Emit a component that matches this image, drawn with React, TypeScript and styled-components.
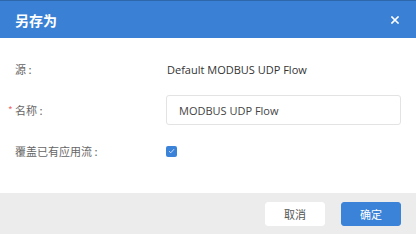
import React from "react";
import styled, { createGlobalStyle } from "styled-components";

const Global = createGlobalStyle`
  html, body { margin: 0; padding: 0; background: #ffffff; }
  body { font-family: "Open Sans", "Noto Sans CJK SC", sans-serif; }
  * { box-sizing: border-box; }
`;

const Dialog = styled.div`
  width: 416px;
  height: 234px;
  display: flex;
  flex-direction: column;
  background: #ffffff;
  overflow: hidden;
`;

const Header = styled.div`
  height: 38px;
  flex: none;
  display: flex;
  align-items: center;
  justify-content: space-between;
  padding: 0 16px 0 15px;
  background: #3a81d5;
  border-top: 1px solid #2e67aa;
`;

const Title = styled.div`
  color: #ffffff;
  font-size: 14px;
  font-weight: 700;
  font-family: "Noto Sans CJK SC", sans-serif;
`;

const Close = styled.button`
  border: none;
  background: transparent;
  padding: 0;
  width: 10px;
  height: 10px;
  display: flex;
  align-items: center;
  justify-content: center;
  cursor: pointer;
`;

const Body = styled.div`
  flex: 1;
  padding: 16px 15px 0 15px;
  display: flex;
  flex-direction: column;
  gap: 11px;
`;

const Row = styled.div`
  display: grid;
  grid-template-columns: 151px 1fr;
  align-items: center;
  height: 30px;
`;

const Label = styled.label<{ $required?: boolean }>`
  position: relative;
  font-size: 11px;
  color: #666666;
  font-family: "Noto Sans CJK SC", sans-serif;
  &::before {
    content: ${(p) => (p.$required ? '"*"' : "none")};
    position: absolute;
    left: -7px;
    top: 0px;
    color: #f06a6a;
    font-size: 10px;
  }
`;

const Value = styled.div`
  font-size: 11px;
  color: #333333;
  padding-left: 1px;
`;

const Input = styled.input`
  width: 235px;
  height: 30px;
  border: 1px solid #e3e3e3;
  border-radius: 3px;
  padding: 0 12px;
  font-size: 11px;
  font-family: "Open Sans", "Noto Sans CJK SC", sans-serif;
  color: #444444;
  outline: none;
  background: #ffffff;
`;

const Check = styled.span`
  width: 11px;
  height: 11px;
  border-radius: 2px;
  background: #3a83d8;
  display: flex;
  align-items: center;
  justify-content: center;
`;

const Footer = styled.div`
  height: 41px;
  flex: none;
  background: #ececec;
  display: flex;
  align-items: center;
  justify-content: flex-end;
  gap: 16px;
  padding: 0 15px;
`;

const Button = styled.button<{ $primary?: boolean }>`
  width: 60px;
  height: 24px;
  border-radius: 3px;
  border: 1px solid ${(p) => (p.$primary ? "#3a83d8" : "#ffffff")};
  background: ${(p) => (p.$primary ? "#3a83d8" : "#ffffff")};
  color: ${(p) => (p.$primary ? "#ffffff" : "#555555")};
  font-size: 11px;
  font-family: "Noto Sans CJK SC", sans-serif;
  padding: 0;
  cursor: pointer;
`;

export default function App() {
  return (
    <>
      <Global />
      <Dialog>
        <Header>
          <Title>另存为</Title>
          <Close aria-label="close">
            <svg width="8" height="8" viewBox="0 0 8 8">
              <path d="M1 1L7 7M7 1L1 7" stroke="#ffffff" strokeWidth="1.6" strokeLinecap="square" />
            </svg>
          </Close>
        </Header>
        <Body>
          <Row>
            <Label>源 :</Label>
            <Value>Default MODBUS UDP Flow</Value>
          </Row>
          <Row>
            <Label $required>名称 :</Label>
            <Input defaultValue="MODBUS UDP Flow" />
          </Row>
          <Row>
            <Label>覆盖已有应用流 :</Label>
            <Check>
              <svg width="7" height="6" viewBox="0 0 7 6">
                <path d="M1 3.2L2.8 4.8L6 1.2" stroke="#dce8f8" strokeWidth="0.9" fill="none" />
              </svg>
            </Check>
          </Row>
        </Body>
        <Footer>
          <Button>取消</Button>
          <Button $primary>确定</Button>
        </Footer>
      </Dialog>
    </>
  );
}
